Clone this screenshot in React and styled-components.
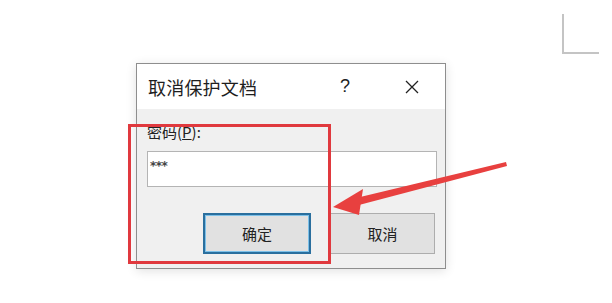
import React from 'react'
import styled, { createGlobalStyle } from 'styled-components'

const Global = createGlobalStyle`
  html, body {
    margin: 0;
    padding: 0;
    background: #fff;
  }
  body {
    font-family: "Noto Sans CJK SC", "Liberation Sans", sans-serif;
  }
`

const Page = styled.div`
  position: relative;
  width: 612px;
  height: 303px;
  overflow: hidden;
  background: #fff;
  padding: 63px 0 0 136px;
  box-sizing: border-box;
`

const Dialog = styled.div`
  width: 310px;
  height: 206px;
  box-sizing: border-box;
  border: 1px solid #8e8e8e;
  background: #f0f0f0;
  box-shadow: 0 2px 10px rgba(0, 0, 0, 0.12);
  display: flex;
  flex-direction: column;
`

const TitleBar = styled.div`
  height: 45px;
  background: #fff;
  display: flex;
  align-items: center;
  padding: 0 0 0 11px;
  color: #1e1e1e;
`

const Title = styled.div`
  flex: 1;
  font-size: 18px;
  letter-spacing: 0.2px;
`

const TitleButton = styled.div`
  width: ${p => p.w}px;
  display: flex;
  justify-content: center;
  align-items: center;
  font-family: "Liberation Sans", sans-serif;
  font-size: 18px;
  color: #222;
`

const Body = styled.div`
  flex: 1;
  display: flex;
  flex-direction: column;
  padding: 12px 8px 14px 10px;
`

const Label = styled.div`
  font-size: 15px;
  color: #222;
  height: 22px;
  line-height: 22px;
`

const Input = styled.div`
  margin-top: 8px;
  height: 36px;
  box-sizing: border-box;
  background: #fff;
  border: 1px solid #b4b4b4;
  padding: 7px 2px 0;
  font-family: "DejaVu Sans", sans-serif;
  font-size: 12px;
  font-weight: bold;
  color: #444;
  letter-spacing: -0.5px;
`

const Buttons = styled.div`
  margin-top: auto;
  display: flex;
  justify-content: flex-end;
  gap: 19px;
  padding-right: 2px;
`

const Button = styled.div`
  width: ${p => p.w}px;
  height: 41px;
  box-sizing: border-box;
  background: #e1e1e1;
  border: ${p => (p.focused ? '2px solid #2a6f9e' : '1px solid #adadad')};
  box-shadow: ${p => (p.focused ? 'inset 0 0 0 1px #7cc0e8' : 'none')};
  display: flex;
  align-items: center;
  justify-content: center;
  font-size: 15px;
  color: #222;
`

const RedBox = styled.div`
  position: absolute;
  left: 128px;
  top: 124px;
  width: 203px;
  height: 140px;
  box-sizing: border-box;
  border: 3px solid #e0393e;
  pointer-events: none;
`

const Overlay = styled.svg`
  position: absolute;
  left: 0;
  top: 0;
  pointer-events: none;
`

const App = () => (
  <Page>
    <Global />
    <Dialog>
      <TitleBar>
        <Title>取消保护文档</Title>
        <TitleButton w={68}>?</TitleButton>
        <TitleButton w={66}>
          <svg width="14" height="14" viewBox="0 0 14 14">
            <path d="M1 1L13 13M13 1L1 13" stroke="#222" strokeWidth="1.3" />
          </svg>
        </TitleButton>
      </TitleBar>
      <Body>
        <Label>密码(<u>P</u>):</Label>
        <Input>***</Input>
        <Buttons>
          <Button w={108} focused>确定</Button>
          <Button w={105}>取消</Button>
        </Buttons>
      </Body>
    </Dialog>
    <RedBox />
    <Overlay width="612" height="303" viewBox="0 0 612 303">
      <polygon points="506,162 507,166 359,205 356,198" fill="#e8403f" />
      <polygon points="333,207 363,189 359,215" fill="#e8403f" />
      <path d="M563 14 V53 H599" fill="none" stroke="#c4c4c4" strokeWidth="2" />
    </Overlay>
  </Page>
)

export default App
